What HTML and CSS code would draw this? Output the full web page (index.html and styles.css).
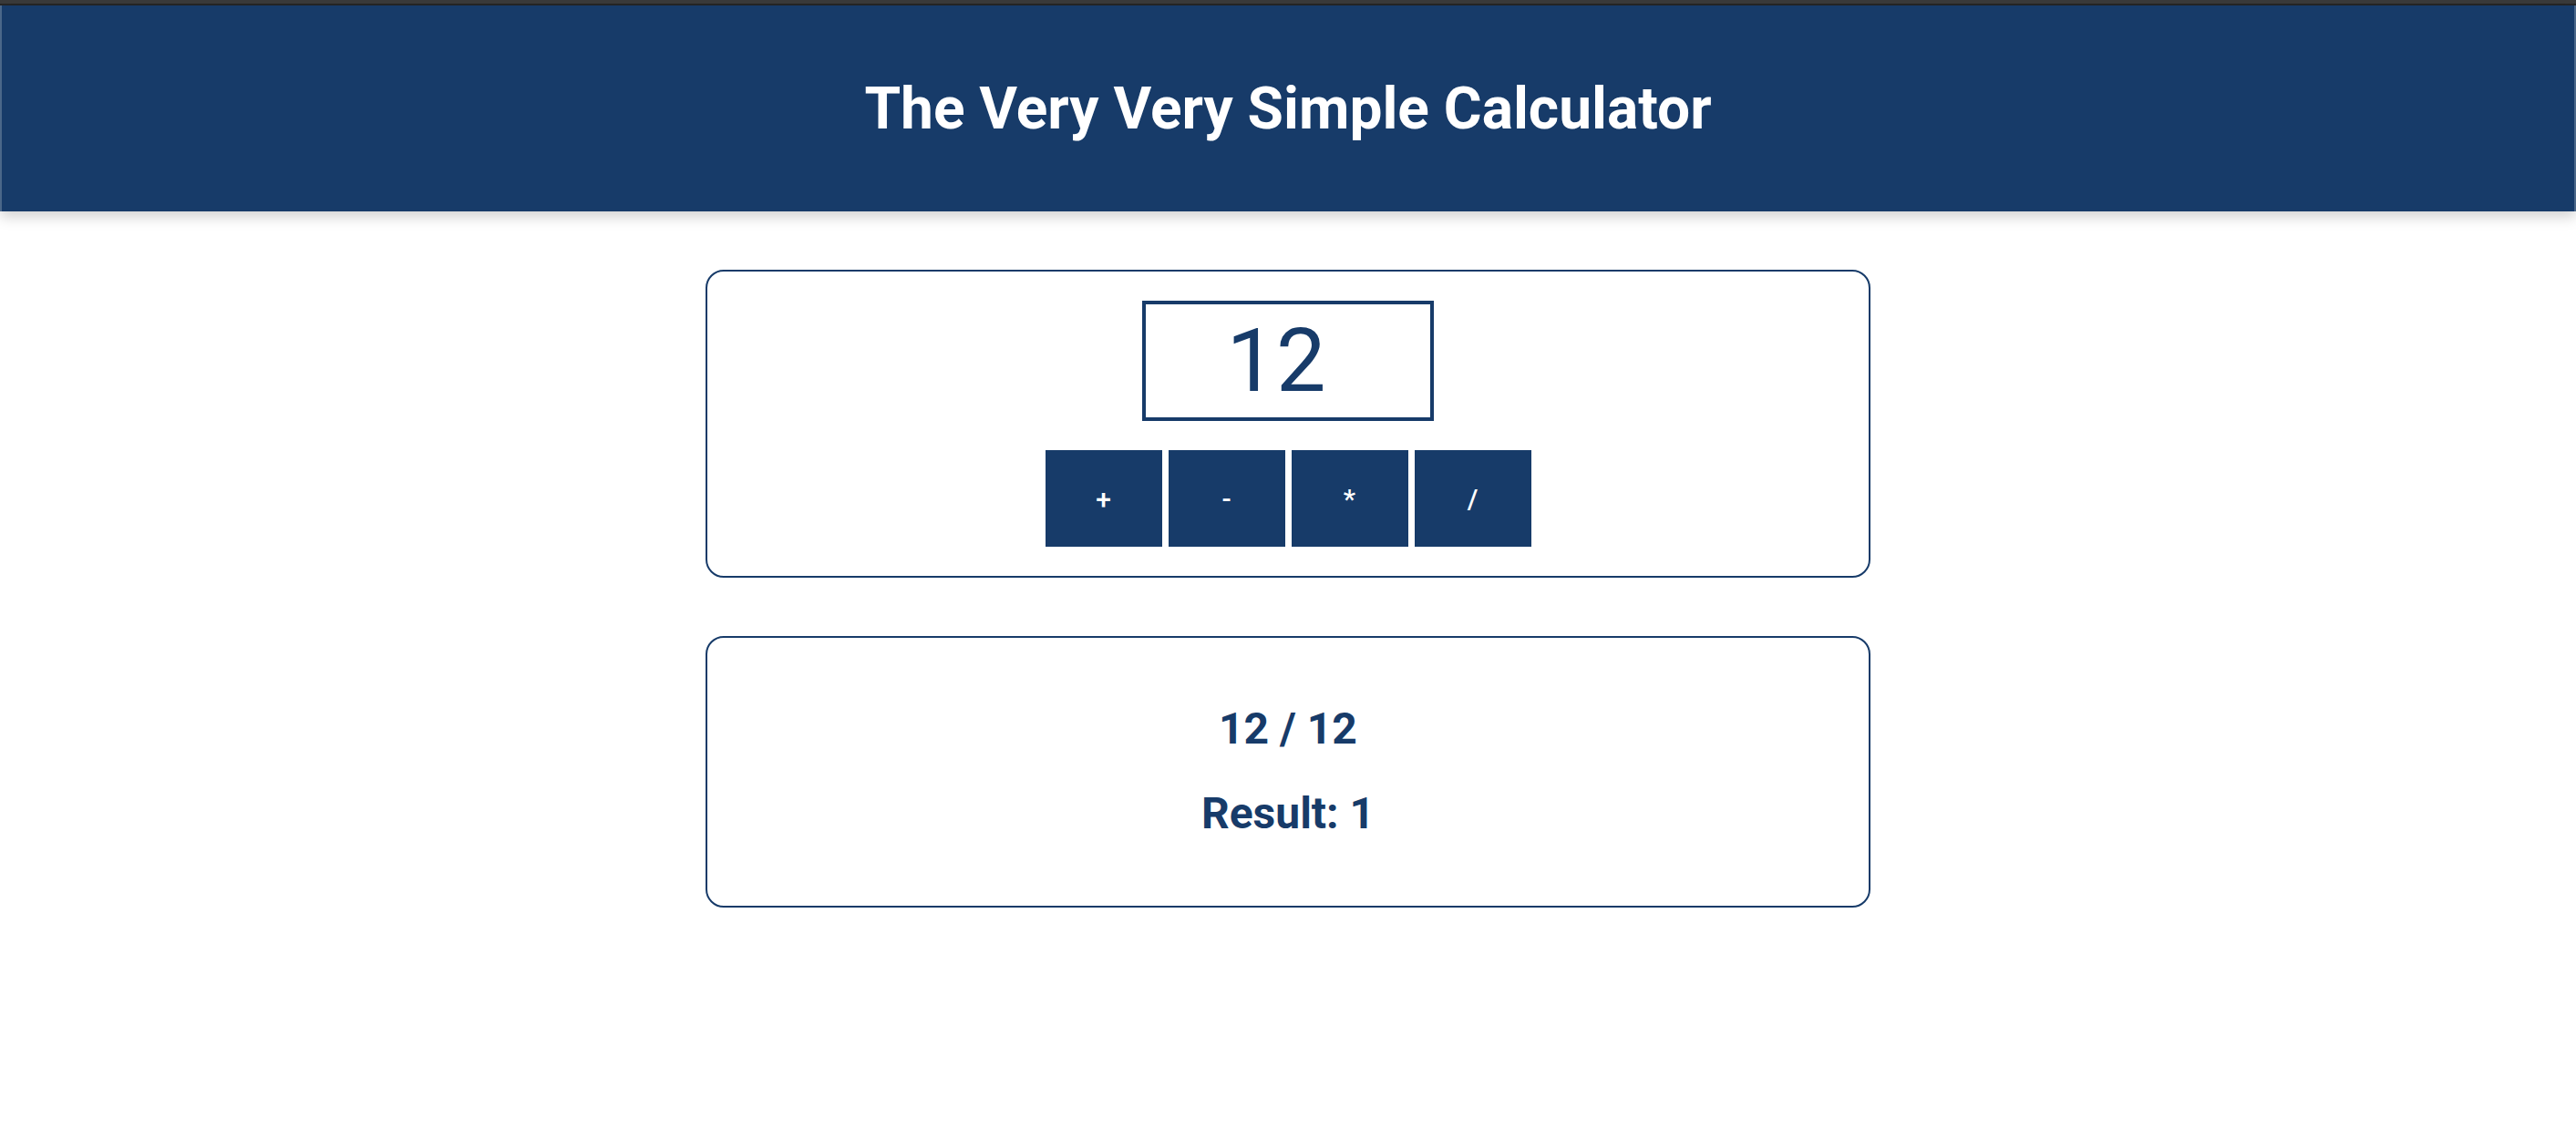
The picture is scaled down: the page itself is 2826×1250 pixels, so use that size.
FILE: index.html
```html
<!DOCTYPE html>
<html lang="en">
<head>
<meta charset="utf-8">
<title>The Very Very Simple Calculator</title>
<link rel="stylesheet" href="styles.css">
</head>
<body>
<div class="top-strip"></div>
<header class="app-header">
  <h1 class="app-title">The Very Very Simple Calculator</h1>
</header>
<main class="app-main">
  <section class="card input-card">
    <input class="number-input" type="text" value="12">
    <div class="ops">
      <button class="op-btn">+</button>
      <button class="op-btn">-</button>
      <button class="op-btn">*</button>
      <button class="op-btn">/</button>
    </div>
  </section>
  <section class="card result-card">
    <h2 class="result-line">12 / 12</h2>
    <h2 class="result-line">Result: 1</h2>
  </section>
</main>
</body>
</html>
```
FILE: styles.css
```css
html, body {
  margin: 0;
  padding: 0;
  background: #ffffff;
  font-family: Roboto, "Liberation Sans", Arial, sans-serif;
}

.top-strip {
  height: 4px;
  background: #3a3a3a;
  border-bottom: 2px solid #262626;
}

.app-header {
  height: 226px;
  background: #173b69;
  border-left: 2px solid #4b6789;
  border-right: 2px solid #4b6789;
  box-shadow: 0 6px 14px rgba(0, 0, 0, 0.18);
  display: flex;
  align-items: center;
  justify-content: center;
  position: relative;
}

.app-title {
  margin: 0;
  color: #ffffff;
  font-size: 64px;
  font-weight: 700;
  line-height: 75px;
}

.app-main {
  width: 1278px;
  margin: 64px auto 0;
  display: flex;
  flex-direction: column;
  gap: 64px;
}

.card {
  border: 2px solid #173b69;
  border-radius: 20px;
  display: flex;
  flex-direction: column;
  align-items: center;
}

.input-card {
  padding: 32px;
  gap: 32px;
}

.number-input {
  box-sizing: border-box;
  width: 320px;
  height: 132px;
  border: 4px solid #173b69;
  border-radius: 0;
  padding: 0 30px 0 4px;
  margin: 0;
  outline: none;
  text-align: center;
  font-family: Roboto, "Liberation Sans", Arial, sans-serif;
  font-size: 97px;
  font-weight: 400;
  color: #173b69;
  background: #ffffff;
}

.ops {
  display: flex;
  gap: 7px;
}

.op-btn {
  width: 128px;
  height: 106px;
  border: none;
  border-radius: 0;
  margin: 0;
  padding: 0;
  background: #173b69;
  color: #ffffff;
  font-family: Roboto, "Liberation Sans", Arial, sans-serif;
  font-size: 30px;
  font-weight: 500;
}

.result-card {
  padding: 72px 32px 73px;
  gap: 37px;
}

.result-line {
  margin: 0;
  color: #173b69;
  font-size: 48px;
  font-weight: 700;
  line-height: 56px;
}
```
